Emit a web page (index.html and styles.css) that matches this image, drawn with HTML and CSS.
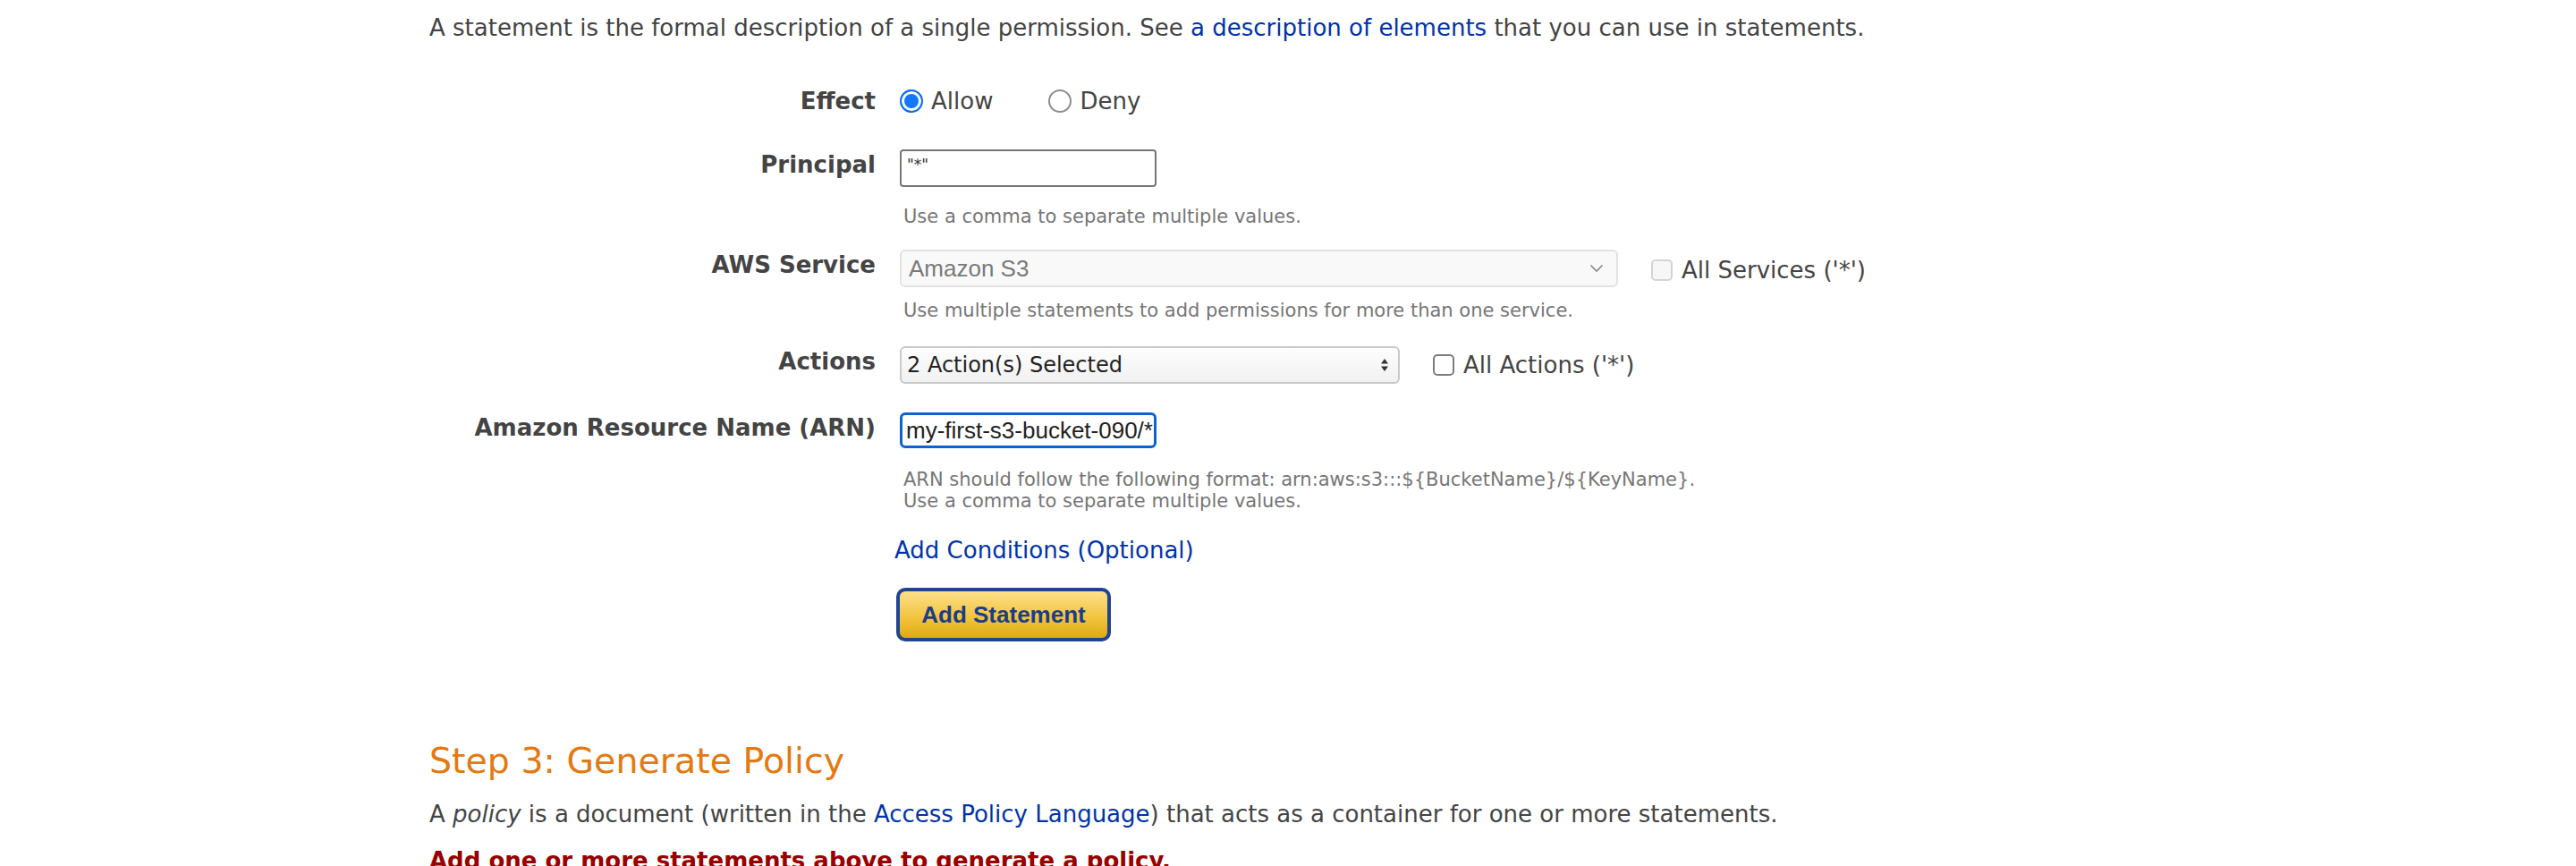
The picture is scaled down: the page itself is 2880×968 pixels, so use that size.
FILE: index.html
```html
<!DOCTYPE html>
<html lang="en">
<head>
<meta charset="utf-8">
<title>AWS Policy Generator</title>
<link rel="stylesheet" href="styles.css">
</head>
<body>
<main class="page">
  <p class="intro">A statement is the formal description of a single permission. See <a href="#" class="link">a description of elements</a> that you can use in statements.</p>

  <div class="form">
    <div class="label row-effect">Effect</div>
    <div class="field row-effect">
      <label class="radio-opt"><span class="radio checked"></span>Allow</label>
      <label class="radio-opt deny"><span class="radio"></span>Deny</label>
    </div>

    <div class="label row-principal">Principal</div>
    <div class="field row-principal">
      <div class="text-input small">"*"</div>
      <div class="help principal-help">Use a comma to separate multiple values.</div>
    </div>

    <div class="label row-service">AWS Service</div>
    <div class="field row-service">
      <div class="inline">
        <div class="select disabled">
          <span>Amazon S3</span>
          <svg class="chev" width="16" height="10" viewBox="0 0 16 10"><path d="M1.5 1.5 L8 8 L14.5 1.5" fill="none" stroke="#8a8a8a" stroke-width="1.6"/></svg>
        </div>
        <label class="check-opt"><span class="checkbox disabled"></span>All Services ('*')</label>
      </div>
      <div class="help service-help">Use multiple statements to add permissions for more than one service.</div>
    </div>

    <div class="label row-actions">Actions</div>
    <div class="field row-actions">
      <div class="inline">
        <div class="select actions">
          <span>2 Action(s) Selected</span>
          <svg class="updown" width="10" height="16" viewBox="0 0 10 16"><path d="M5 1 L9 6.5 H1 Z M5 15 L9 9.5 H1 Z" fill="#333"/></svg>
        </div>
        <label class="check-opt"><span class="checkbox"></span>All Actions ('*')</label>
      </div>
    </div>

    <div class="label row-arn">Amazon Resource Name (ARN)</div>
    <div class="field row-arn">
      <div class="text-input focused">my-first-s3-bucket-090/*</div>
      <div class="help arn-help">ARN should follow the following format: arn:aws:s3:::${BucketName}/${KeyName}.<br>Use a comma to separate multiple values.</div>
    </div>

    <div class="label"></div>
    <div class="field actions-col">
      <a href="#" class="link conditions">Add Conditions (Optional)</a>
      <button class="btn" type="button">Add Statement</button>
    </div>
  </div>

  <h2 class="step">Step 3: Generate Policy</h2>
  <p class="policy">A <em>policy</em> is a document (written in the <a href="#" class="link">Access Policy Language</a>) that acts as a container for one or more statements.</p>
  <p class="warn">Add one or more statements above to generate a policy.</p>
</main>
</body>
</html>
```

FILE: styles.css
```css
html, body {
  margin: 0;
  padding: 0;
  background: #ffffff;
}

body {
  font-family: "DejaVu Sans", Verdana, sans-serif;
  color: #444444;
  font-size: 26px;
  overflow: hidden;
  height: 968px;
}

.page {
  padding-left: 480px;
}

.link {
  color: #0033aa;
  text-decoration: none;
}

.intro {
  margin: 0;
  padding-top: 14px;
  line-height: 34px;
  font-size: 26px;
}

.form {
  display: grid;
  grid-template-columns: 499px auto;
  column-gap: 27px;
  margin-top: 48px;
}

.label {
  text-align: right;
  font-weight: bold;
  font-size: 26px;
  line-height: 34px;
  color: #444444;
  white-space: nowrap;
}

.field {
  display: flex;
  flex-direction: column;
  align-items: flex-start;
}

.row-effect.field {
  flex-direction: row;
  align-items: center;
  height: 34px;
}

.row-effect { margin-bottom: 37px; }
.row-principal { margin-bottom: 25px; }
.row-service { margin-bottom: 28px; }
.row-actions { margin-bottom: 32px; }
.row-arn { margin-bottom: 26px; }

.radio-opt {
  display: flex;
  align-items: center;
  gap: 9px;
  line-height: 34px;
}

.radio-opt.deny {
  margin-left: 62px;
}

.radio {
  width: 26px;
  height: 26px;
  border-radius: 50%;
  border: 2px solid #8e8e8e;
  box-sizing: border-box;
  background: #ffffff;
}

.radio.checked {
  border: 2px solid #0a6cf5;
  box-shadow: inset 0 0 0 3px #ffffff;
  background: #1478ff;
}

.text-input {
  box-sizing: border-box;
  width: 287px;
  height: 42px;
  border: 2px solid #767676;
  border-radius: 4px;
  font-family: "Liberation Sans", Arial, sans-serif;
  color: #222222;
  padding: 2px 6px;
  white-space: nowrap;
  overflow: hidden;
}

.text-input.small {
  font-family: "DejaVu Sans", Verdana, sans-serif;
  font-size: 17px;
  line-height: 22px;
  padding-top: 4px;
  color: #333333;
}

.text-input.focused {
  height: 40px;
  border: 3px solid #0b62d0;
  border-radius: 6px;
  font-size: 26px;
  line-height: 32px;
  padding: 1px 4px;
  color: #222222;
}

.help {
  font-size: 21px;
  line-height: 24px;
  color: #767676;
  padding-left: 4px;
}

.principal-help { margin-top: 21px; }
.service-help { margin-top: 14px; }
.arn-help { margin-top: 23px; }

.inline {
  display: flex;
  align-items: center;
}

.select {
  box-sizing: border-box;
  height: 42px;
  border-radius: 6px;
  display: flex;
  align-items: center;
  justify-content: space-between;
  padding: 0 10px 0 8px;
}

.select.disabled {
  width: 803px;
  background: #f9f9f9;
  border: 2px solid #e2e2e2;
  color: #7a7a7a;
  font-family: "Liberation Sans", Arial, sans-serif;
  font-size: 26px;
  padding-left: 8px;
  padding-right: 14px;
}

.select.actions {
  width: 559px;
  background: linear-gradient(#fdfdfd, #f1f1f1);
  border: 2px solid #c9c9c9;
  color: #222222;
  font-size: 24px;
  padding-left: 6px;
  padding-right: 10px;
}

.check-opt {
  display: flex;
  align-items: center;
  gap: 10px;
  margin-left: 37px;
  line-height: 34px;
}

.row-service .check-opt {
  padding-top: 4px;
}

.checkbox {
  width: 24px;
  height: 24px;
  box-sizing: border-box;
  border: 2px solid #7c7c7c;
  border-radius: 5px;
  background: #ffffff;
}

.checkbox.disabled {
  border-color: #d4d4d4;
  background: #f7f7f7;
}

.actions-col {
  margin-left: -6px;
}

.conditions {
  font-size: 26px;
  line-height: 34px;
}

.btn {
  margin-top: 25px;
  margin-left: 2px;
  box-sizing: border-box;
  width: 240px;
  height: 60px;
  border: 4px solid #1f4591;
  border-radius: 10px;
  background: linear-gradient(#fde08a, #f1c540 55%, #e0a912);
  color: #1c3d86;
  font-family: "Liberation Sans", Arial, sans-serif;
  font-weight: bold;
  font-size: 26px;
  padding: 0;
  cursor: pointer;
}

.step {
  margin: 109px 0 0 0;
  font-weight: normal;
  color: #e47911;
  font-size: 39.5px;
  line-height: 48px;
}

.policy {
  margin: 19px 0 0 0;
  font-size: 26px;
  line-height: 34px;
}

.warn {
  margin: 18px 0 0 0;
  color: #990000;
  font-weight: bold;
  font-size: 26px;
  line-height: 34px;
}
```
